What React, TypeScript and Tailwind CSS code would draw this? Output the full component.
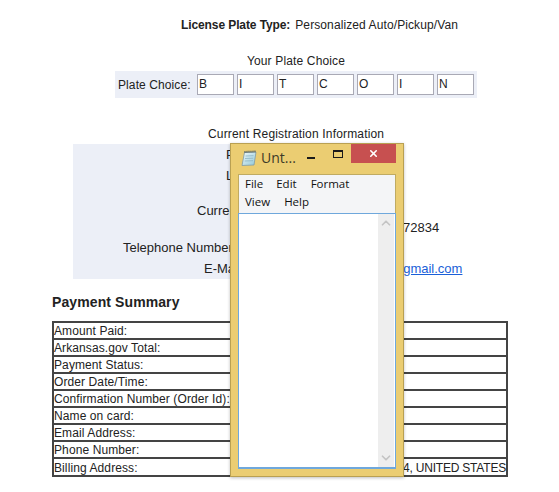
import React from 'react';
import { ChevronUp, ChevronDown, X } from 'lucide-react';

const plateLetters = ['B', 'I', 'T', 'C', 'O', 'I', 'N'];

const registrationRows: { label: string; labelPad: string; value: React.ReactNode; valuePad: string; height: string }[] = [
  { label: 'Plate:', labelPad: 'pl-[153px]', value: '', valuePad: '', height: 'h-[21px]' },
  { label: 'License:', labelPad: 'pl-[153px]', value: '', valuePad: '', height: 'h-[22px]' },
  { label: '', labelPad: '', value: '', valuePad: '', height: 'h-[14px]' },
  { label: 'Current:', labelPad: 'pl-[124px]', value: '', valuePad: '', height: 'h-[20px]' },
  { label: '', labelPad: '', value: '72834', valuePad: 'pl-[130px]', height: 'h-[13px]' },
  { label: 'Telephone Number:', labelPad: 'pl-[50px]', value: '', valuePad: '', height: 'h-[28px]' },
  {
    label: 'E-Mail:',
    labelPad: 'pl-[131px] pb-[4px]',
    value: <a href="#" className="text-[#1a5fd8] underline">@gmail.com</a>,
    valuePad: 'pl-[117px] pb-[4px]',
    height: 'h-[17px]',
  },
];

const paymentRows: { label: string; value?: string }[] = [
  { label: 'Amount Paid:' },
  { label: 'Arkansas.gov Total:' },
  { label: 'Payment Status:' },
  { label: 'Order Date/Time:' },
  { label: 'Confirmation Number (Order Id):' },
  { label: 'Name on card:' },
  { label: 'Email Address:' },
  { label: 'Phone Number:' },
  { label: 'Billing Address:', value: '4, UNITED STATES' },
];

const NotepadIcon = () => (
  <svg width="16" height="16" viewBox="0 0 16 16" className="shrink-0">
    <defs>
      <linearGradient id="page" x1="0" y1="0" x2="1" y2="1">
        <stop offset="0" stopColor="#f2fafc" />
        <stop offset="1" stopColor="#8fc7d8" />
      </linearGradient>
    </defs>
    <path d="M3.5 2.5 L15 2 L13 15 L1 15.5 Z" fill="url(#page)" stroke="#7f9aa6" strokeWidth="0.8" />
    <path d="M4.5 6 L12.5 5.7 M4 8.5 L12.2 8.2 M3.7 11 L12 10.7" stroke="#8ab4c4" strokeWidth="0.8" />
    <path d="M3.5 2 L14.5 1.5" stroke="#46555c" strokeWidth="2" strokeDasharray="1 1" />
  </svg>
);

const NotepadWindow = () => (
  <div className="absolute left-[230px] top-[143px] w-[174px] h-[334px] bg-[#ebcd72] border border-[#b9a052] flex flex-col px-[7px] pb-[7px] shadow-[0_1px_3px_rgba(0,0,0,0.25)]">
    <div className="h-[30px] flex items-start shrink-0 relative">
      <div className="absolute left-[3px] top-[6px]">
        <NotepadIcon />
      </div>
      <span className="absolute left-[23px] top-[4px] text-[14px] text-[#3d3a28] font-['Open_Sans',sans-serif] leading-[20px]">Unt...</span>
      <div className="absolute left-[69px] top-[13px] w-[8px] h-[2px] bg-[#1a1a1a]" />
      <div className="absolute left-[95px] top-[6px] w-[10px] h-[8px] border border-[#1a1a1a] border-t-2" />
      <div className="absolute left-[113px] top-0 w-[45px] h-[19px] bg-[#c75050] flex items-center justify-center">
        <X size={11} strokeWidth={3.5} className="text-white" />
      </div>
    </div>
    <div className="bg-[#f4f5f7] border border-[#c0ab62] border-b-0 h-[39px] shrink-0 text-[11.5px] leading-[18px] text-[#111] font-['Open_Sans',sans-serif] pl-[6px]">
      <div className="flex gap-[13px]">
        <span>File</span>
        <span>Edit</span>
        <span className="ml-[1px]">Format</span>
      </div>
      <div className="flex gap-[14px]">
        <span>View</span>
        <span>Help</span>
      </div>
    </div>
    <div className="flex-1 bg-white border-b-2 border-x border-t border-[#6fa8dc] flex justify-end pr-[1px]">
      <div className="w-[16px] bg-[#eeeeee] flex flex-col justify-between items-center py-[2px]">
        <ChevronUp size={14} strokeWidth={3} className="text-[#c4c4c4]" />
        <ChevronDown size={14} strokeWidth={3} className="text-[#c4c4c4]" />
      </div>
    </div>
  </div>
);

export default function App() {
  return (
    <div className="relative w-[559px] h-[492px] overflow-hidden bg-white text-[12px] text-[#222] font-['Liberation_Sans',Arial,sans-serif]">
      <div className="pt-[18px] pl-[181px] flex gap-[5px] leading-[15px]">
        <span className="font-bold tracking-[-0.1px]">License Plate Type:</span>
        <span className="tracking-[0.1px]">Personalized Auto/Pickup/Van</span>
      </div>

      <div className="mt-[21px] w-[362px] ml-[115px]">
        <div className="text-center leading-[15px] mb-[2px] tracking-[0.15px]">Your Plate Choice</div>
        <div className="h-[27px] bg-[#eceff7] flex items-center pl-[3px]">
          <span className="w-[79px] shrink-0 tracking-[0.1px]">Plate Choice:</span>
          <div className="flex gap-[3px]">
            {plateLetters.map((letter, i) => (
              <div key={i} className="w-[37px] h-[21px] bg-white border border-[#a9a9b5] pl-[1px] leading-[19px]">
                {letter}
              </div>
            ))}
          </div>
        </div>
      </div>

      <div className="mt-[29px] pl-[208px] leading-[15px] tracking-[0.17px]">Current Registration Information</div>

      <div className="mt-[2px] ml-[73px] flex flex-col text-[13px]">
        {registrationRows.map((row, i) => (
          <div key={i} className={`flex items-center ${row.height}`}>
            <div className={`w-[200px] h-full bg-[#eceff7] flex items-center whitespace-nowrap ${row.labelPad}`}>{row.label}</div>
            <div className={row.valuePad}>{row.value}</div>
          </div>
        ))}
      </div>

      <h2 className="mt-[14px] ml-[52px] text-[14px] font-bold leading-[18px] tracking-[0.1px] text-[#222]">Payment Summary</h2>

      <table className="mt-[10px] ml-[52px] w-[456px] border-collapse border-2 border-[#444] table-fixed">
        <tbody>
          {paymentRows.map(row => (
            <tr key={row.label} className="h-[17px] last:h-[18px] border-b-2 border-[#444] last:border-b-0">
              <td className="p-0 pt-[1px] leading-[14px] whitespace-nowrap tracking-[0.1px]">{row.label}</td>
              <td className="p-0 pt-[1px] text-right leading-[14px] whitespace-nowrap tracking-[-0.2px]">{row.value}</td>
            </tr>
          ))}
        </tbody>
      </table>

      <NotepadWindow />
    </div>
  );
}
